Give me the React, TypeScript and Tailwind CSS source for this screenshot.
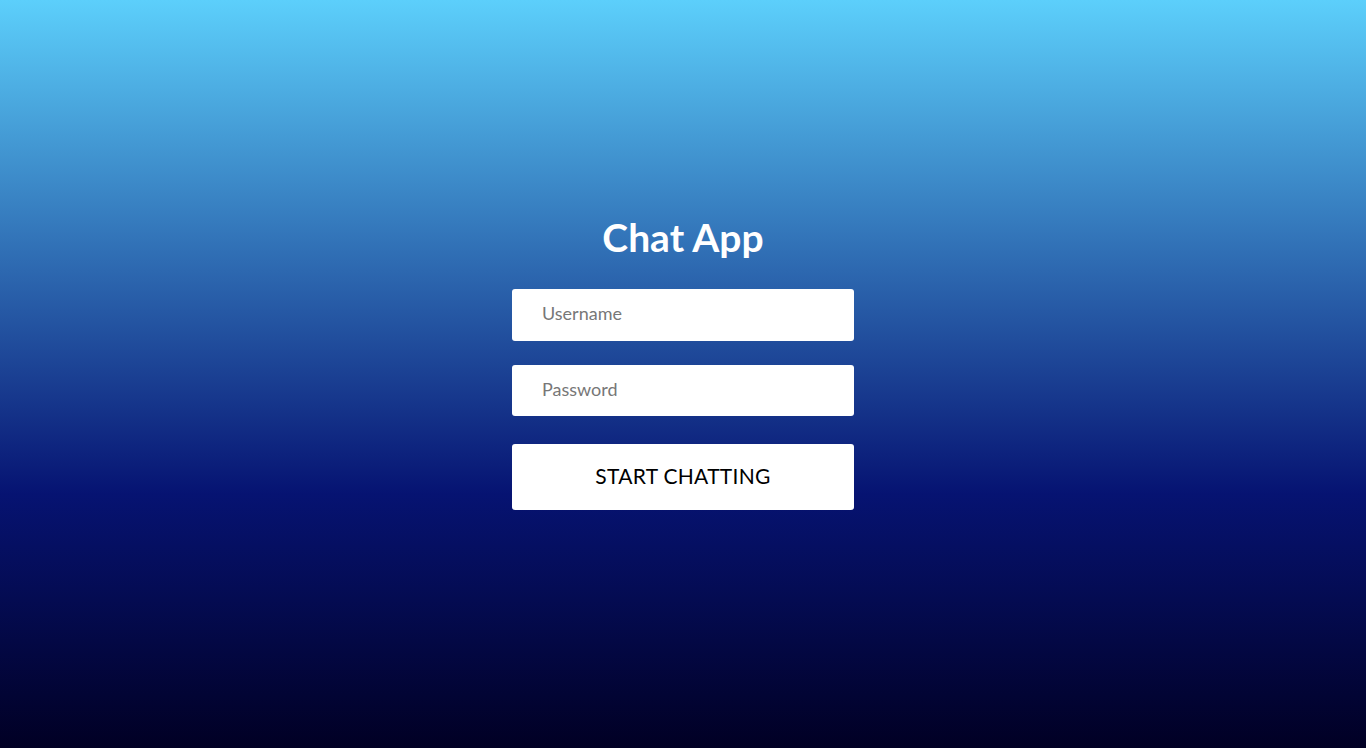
import React, { useState } from 'react';

const App: React.FC = () => {
  const [username, setUsername] = useState('');
  const [password, setPassword] = useState('');

  return (
    <div
      className="min-h-screen w-full flex flex-col items-center pt-[215px] bg-[linear-gradient(to_bottom,#5ccffb_0%,#061372_66%,#010024_100%)]"
      style={{ fontFamily: 'Lato, "Noto Sans", sans-serif' }}
    >
      <h1 className="text-white font-bold text-[39px] leading-[44px] mb-[30px]">Chat App</h1>

      <form className="w-[342px] flex flex-col" onSubmit={(e) => e.preventDefault()}>
        <input
          type="text"
          value={username}
          onChange={(e) => setUsername(e.target.value)}
          placeholder="Username"
          className="h-[52px] w-full bg-white rounded-[3px] pl-[30px] pr-4 pb-[4px] text-[18px] text-gray-800 placeholder-[#777777] outline-none"
        />
        <input
          type="password"
          value={password}
          onChange={(e) => setPassword(e.target.value)}
          placeholder="Password"
          className="mt-[24px] h-[51px] w-full bg-white rounded-[3px] pl-[30px] pr-4 pb-[4px] text-[18px] text-gray-800 placeholder-[#777777] outline-none"
        />
        <button
          type="submit"
          className="mt-[28px] h-[66px] w-full bg-white rounded-[3px] pb-[2px] text-[21px] text-black tracking-[0.3px] cursor-pointer"
        >
          START CHATTING
        </button>
      </form>
    </div>
  );
};

export default App;
